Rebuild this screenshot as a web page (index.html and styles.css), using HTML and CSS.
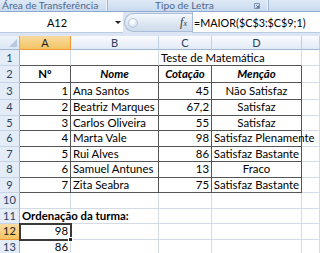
FILE: index.html
```html
<!DOCTYPE html>
<html lang="pt">
<head>
<meta charset="utf-8">
<link rel="stylesheet" href="styles.css">
</head>
<body>
<div class="ribbon">
  <div class="group g1"><span class="glabel">Área de Transferência</span><svg class="launcher" width="6" height="6" viewBox="0 0 6 6"><path d="M0.5 0.5H5.5V5.5H0.5Z" fill="none" stroke="#7d93b4" stroke-width="1"/><path d="M2 2L4.5 4.5M4.5 2.5V4.5H2.5" fill="none" stroke="#4a6185" stroke-width="0.8"/></svg></div>
  <div class="group g2"><span class="glabel">Tipo de Letra</span><svg class="launcher" width="6" height="6" viewBox="0 0 6 6"><path d="M0.5 0.5H5.5V5.5H0.5Z" fill="none" stroke="#7d93b4" stroke-width="1"/><path d="M2 2L4.5 4.5M4.5 2.5V4.5H2.5" fill="none" stroke="#4a6185" stroke-width="0.8"/></svg></div>
  <div class="group g3"></div>
</div>
<div class="fbar">
  <div class="namebox"><span class="nb-text">A12</span><span class="nb-arrow"></span></div>
  <div class="fxbtn"><span class="grip"></span><span class="fx">f<span class="fxs">x</span></span></div>
  <div class="finput">=MAIOR($C$3:$C$9;1)</div>
</div>
<div class="sheet">
  <div class="corner"></div>
  <div class="ch sel">A</div><div class="ch">B</div><div class="ch">C</div><div class="ch">D</div><div class="ch"></div>

  <div class="rh">1</div>
  <div class="c top"></div><div class="c top"></div><div class="c top span2">Teste de Matemática</div><div class="c"></div>

  <div class="rh">2</div>
  <div class="c t ctr b">Nº</div><div class="c t ctr bi">Nome</div><div class="c t ctr bi">Cotação</div><div class="c t ctr bi">Menção</div><div class="c"></div>

  <div class="rh">3</div>
  <div class="c t r">1</div><div class="c t">Ana Santos</div><div class="c t r">45</div><div class="c t ctr">Não Satisfaz</div><div class="c"></div>

  <div class="rh">4</div>
  <div class="c t r">2</div><div class="c t">Beatriz Marques</div><div class="c t r">67,2</div><div class="c t ctr">Satisfaz</div><div class="c"></div>

  <div class="rh">5</div>
  <div class="c t r">3</div><div class="c t">Carlos Oliveira</div><div class="c t r">55</div><div class="c t ctr">Satisfaz</div><div class="c"></div>

  <div class="rh">6</div>
  <div class="c t r">4</div><div class="c t">Marta Vale</div><div class="c t r">98</div><div class="c t">Satisfaz Plenamente</div><div class="c"></div>

  <div class="rh">7</div>
  <div class="c t r">5</div><div class="c t">Rui Alves</div><div class="c t r">86</div><div class="c t ctr">Satisfaz Bastante</div><div class="c"></div>

  <div class="rh">8</div>
  <div class="c t r">6</div><div class="c t">Samuel Antunes</div><div class="c t r">13</div><div class="c t ctr">Fraco</div><div class="c"></div>

  <div class="rh">9</div>
  <div class="c t r">7</div><div class="c t">Zita Seabra</div><div class="c t r">75</div><div class="c t ctr">Satisfaz Bastante</div><div class="c"></div>

  <div class="rh">10</div>
  <div class="c"></div><div class="c"></div><div class="c"></div><div class="c"></div><div class="c"></div>

  <div class="rh">11</div>
  <div class="c span2 b">Ordenação da turma:</div><div class="c"></div><div class="c"></div><div class="c"></div>

  <div class="rh sel">12</div>
  <div class="c r active">98<span class="handle"></span></div><div class="c"></div><div class="c"></div><div class="c"></div><div class="c"></div>

  <div class="rh">13</div>
  <div class="c r">86</div><div class="c"></div><div class="c"></div><div class="c"></div><div class="c"></div>
</div>
</body>
</html>
```
FILE: styles.css
```css
* { box-sizing: border-box; }
body {
  margin: 0;
  width: 320px;
  height: 253px;
  overflow: hidden;
  background: #ffffff;
  font-family: Lato, "Liberation Sans", Arial, sans-serif;
}

/* ribbon group labels */
.ribbon {
  display: flex;
  height: 12px;
  background: linear-gradient(#dfe9f6, #c9daef);
  border-bottom: 1px solid #8eaad0;
}
.group {
  display: flex;
  align-items: center;
  height: 11px;
  border-right: 1px solid #9fb6d6;
  box-shadow: inset -1px 0 #eef3fa;
}
.g1 { width: 108px; padding-left: 2px; }
.g2 { width: 161px; padding-left: 47px; }
.g3 { flex: 1; border-right: none; box-shadow: none; }
.glabel {
  font-size: 10.2px;
  line-height: 11px;
  color: #4f6990;
  white-space: nowrap;
}
.launcher { margin-left: auto; margin-right: 8px; }

/* formula bar */
.fbar {
  display: flex;
  align-items: flex-start;
  height: 24px;
  background: #dbe5f3;
}
.namebox {
  display: flex;
  align-items: center;
  width: 123px;
  height: 21px;
  background: #ffffff;
  border-bottom: 1px solid #b9cbe3;
}
.nb-text {
  width: 114px;
  text-align: center;
  font-size: 11px;
  color: #000;
}
.nb-arrow {
  width: 0;
  height: 0;
  border-left: 3px solid transparent;
  border-right: 3px solid transparent;
  border-top: 3px solid #222;
  margin-left: 1px;
}
.fxbtn {
  display: flex;
  align-items: center;
  width: 68px;
  height: 19px;
  margin-top: 1px;
  margin-left: 1px;
  border: 1px solid #a9bdd8;
  border-right: none;
  border-radius: 10px 0 0 10px;
  background: linear-gradient(#f5f8fc, #dde6f2 55%, #cfdbec);
}
.grip {
  width: 10px;
  height: 10px;
  margin-left: 3px;
  border-radius: 50%;
  background: radial-gradient(circle at 40% 35%, #ffffff 20%, #d3deec 70%, #aebfd6);
  border: 1px solid #b9c8dc;
}
.fx {
  margin-left: auto;
  margin-right: 5px;
  font-family: "Liberation Serif", "Times New Roman", serif;
  font-style: italic;
  font-size: 12px;
  color: #333;
}
.fxs { font-size: 8px; }
.finput {
  flex: 1;
  height: 21px;
  display: flex;
  align-items: center;
  padding-left: 1px;
  background: #ffffff;
  border-left: 1px solid #a9bdd8;
  border-bottom: 1px solid #b9cbe3;
  font-size: 10.8px;
  color: #000;
  white-space: nowrap;
}

/* sheet grid */
.sheet {
  display: grid;
  grid-template-columns: 20px 51px 88px 53px 90px 18px;
  grid-template-rows: 14px 16px 17px 17px repeat(10, 15.5px);
  font-size: 11.4px;
  line-height: 12px;
  color: #000;
}
.corner {
  position: relative;
  background: linear-gradient(#eef3fa, #dde7f4);
  border-right: 1px solid #9eb6ce;
  border-bottom: 1px solid #9eb6ce;
}
.corner::after {
  content: "";
  position: absolute;
  right: 2px;
  bottom: 2px;
  width: 0;
  height: 0;
  border-left: 8px solid transparent;
  border-bottom: 8px solid #b7c8de;
}
.ch {
  display: flex;
  align-items: center;
  justify-content: center;
  font-size: 11px;
  color: #27415f;
  background: linear-gradient(#f9fbfe, #e3eaf5);
  border-right: 1px solid #c0d0e4;
  border-bottom: 1px solid #9eb6ce;
}
.rh {
  display: flex;
  align-items: center;
  justify-content: center;
  font-size: 11px;
  color: #27415f;
  background: #e4ecf7;
  border-right: 1px solid #9eb6ce;
  border-bottom: 1px solid #c5d3e6;
}
.ch.sel, .rh.sel {
  background: linear-gradient(#f9dba2, #f2c462);
  color: #1d1d1d;
  border-right-color: #f29536;
  border-bottom-color: #f29536;
}
.c {
  display: flex;
  align-items: center;
  padding: 0 2px;
  white-space: nowrap;
  border-right: 1px solid #d4dae6;
  border-bottom: 1px solid #d4dae6;
}
.t { border-right-color: #555555; border-bottom-color: #555555; }
.top { border-bottom-color: #555555; }
.span2 { grid-column: span 2; }
.r { justify-content: flex-end; }
.ctr { justify-content: center; }
.b { font-weight: bold; }
.bi { font-weight: bold; font-style: italic; }
.active {
  position: relative;
  outline: 2px solid #3a3a3a;
  outline-offset: -1px;
}
.handle {
  position: absolute;
  right: -3px;
  bottom: -3px;
  width: 5px;
  height: 5px;
  background: #222;
  border: 1px solid #fff;
}
```
